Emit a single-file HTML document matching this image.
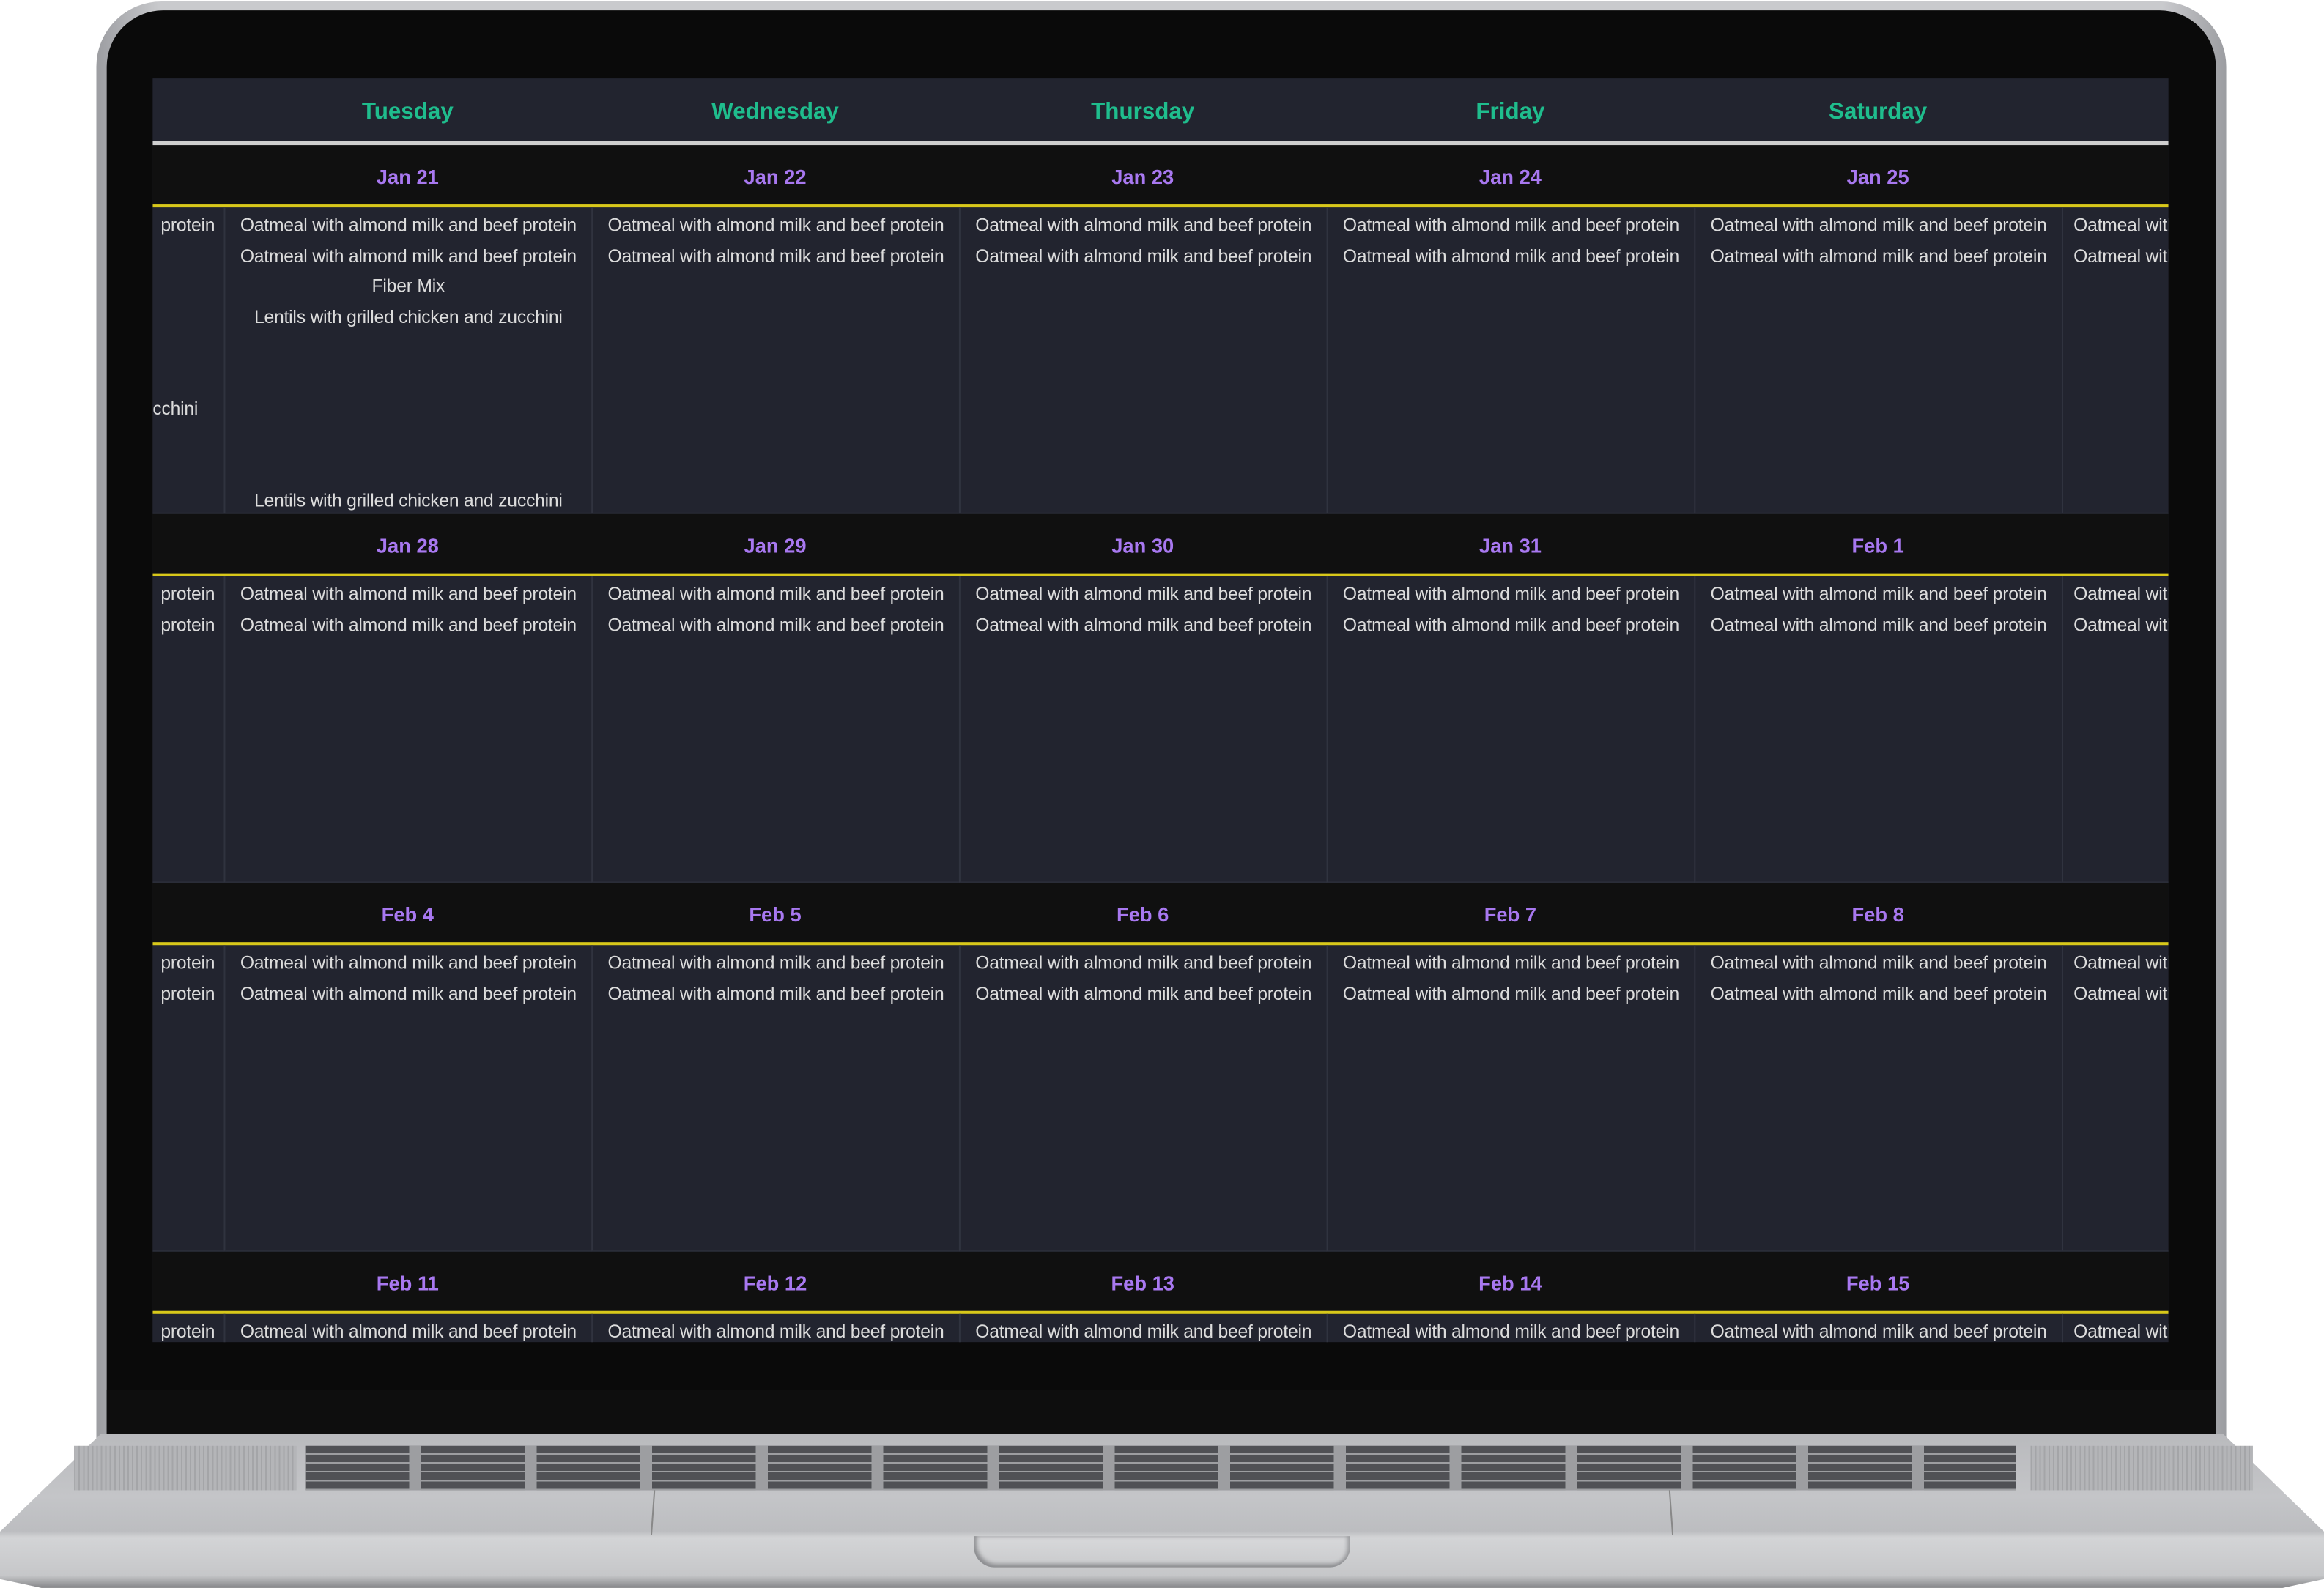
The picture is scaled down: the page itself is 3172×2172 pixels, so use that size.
<!DOCTYPE html>
<html><head><meta charset="utf-8"><style>
*{margin:0;padding:0;box-sizing:border-box}
html,body{width:3172px;height:2172px;background:#fff;overflow:hidden}
#w{position:absolute;left:0;top:0;width:1568px;height:1074px;transform:scale(2.0230,2.0223);transform-origin:0 0}
.lid{position:absolute;left:65px;top:1px;width:1437px;height:980px;border-radius:44px 44px 0 0;background:linear-gradient(90deg,#9c9da1,#c9cacd 3%,#c9cacd 97%,#9c9da1)}
.bez{position:absolute;left:72px;top:7px;width:1423px;height:975px;border-radius:38px 38px 0 0;background:#0a0a0a}
.chin{position:absolute;left:72px;top:938px;width:1423px;height:35px;background:#0e0e0e}
.scr{position:absolute;left:103px;top:53px;width:1360px;height:853px;overflow:hidden;background:#22242f;font-family:"Liberation Sans",sans-serif}
.hdr{position:absolute;left:0;top:0;width:1360px;height:42px;background:#22242f}
.bar{position:absolute;left:0;top:42px;width:1360px;height:3px;background:#cfcfcf}
.c{position:absolute;text-align:center;white-space:nowrap;overflow:hidden}
.day{top:2px;height:42px;line-height:42px;color:#1fbd8d;font-weight:bold;font-size:15.5px;width:248px}
.row{position:absolute;left:0;width:1360px;height:249px}
.band{position:absolute;left:0;top:0;width:1360px;height:40px;background:#101010}
.dt{top:2px;height:40px;line-height:40px;color:#a878f0;font-weight:bold;font-size:13.5px;width:248px}
.yl{position:absolute;left:0;top:40px;width:1360px;height:2px;background:#d8c81a}
.cell{position:absolute;top:42px;height:207px;border-left:1px solid #30333f;border-bottom:1px solid #2a2d38;padding-top:2px}
.cell div{height:20.7px;line-height:20.7px;font-size:12.2px;color:#dcdcdc;white-space:nowrap;text-align:center;overflow:hidden;letter-spacing:-0.1px}
.f div{text-align:right;padding-right:6px}
.l div{text-align:left;padding-left:7px}
.base{position:absolute;left:0;top:968px;width:1568px;height:106px;clip-path:polygon(68px 0,1500px 0,1568px 66px,1568px 98px,1540px 104px,28px 104px,0 98px,0 66px);background:linear-gradient(180deg,#b9babd 0,#c4c5c8 40%,#bcbdc0 62%,#d3d4d6 66%,#c6c7c9 90%,#8e8f92 97%,#3a3a3c 100%)}
.kb{position:absolute;left:206px;top:976px;width:1154px;height:30px;
background-image:repeating-linear-gradient(180deg,rgba(0,0,0,0) 0 5px,#9d9ea1 5px 6px),repeating-linear-gradient(90deg,#505155 0 70px,#9d9ea1 70px 78px);background-color:#505155}
.grill{position:absolute;top:976px;width:150px;height:30px;background:repeating-linear-gradient(90deg,#a4a5a8 0 1px,#b4b5b8 1px 3px)}
.notch{position:absolute;left:657px;top:1037px;width:254px;height:21px;border-radius:0 0 14px 14px;background:linear-gradient(180deg,#d8d9db,#c9cacc);box-shadow:inset 2px -2px 3px #8d8e91,inset -2px 0 3px #9a9b9e}
.tp{position:absolute;top:1006px;width:1px;height:30px;background:#888}
</style></head><body><div id="w">
<div class="lid"></div><div class="bez"></div><div class="chin"></div>
<div class="scr">
<div class="hdr"></div>
<div class="c day" style="left:48px">Tuesday</div>
<div class="c day" style="left:296px">Wednesday</div>
<div class="c day" style="left:544px">Thursday</div>
<div class="c day" style="left:792px">Friday</div>
<div class="c day" style="left:1040px">Saturday</div>
<div class="bar"></div>

<div class="row" style="top:45px"><div class="band"></div>
<div class="c dt" style="left:48px">Jan 21</div><div class="c dt" style="left:296px">Jan 22</div><div class="c dt" style="left:544px">Jan 23</div><div class="c dt" style="left:792px">Jan 24</div><div class="c dt" style="left:1040px">Jan 25</div>
<div class="yl"></div>
<div class="cell f" style="left:-1px;width:49px"><div>protein</div><div></div><div></div><div></div><div></div><div></div><div style="text-align:left;padding-left:0">cchini</div></div>
<div class="cell" style="left:48px;width:248px"><div>Oatmeal with almond milk and beef protein</div><div>Oatmeal with almond milk and beef protein</div><div>Fiber Mix</div><div>Lentils with grilled chicken and zucchini</div><div></div><div></div><div></div><div></div><div></div><div>Lentils with grilled chicken and zucchini</div></div>
<div class="cell" style="left:296px;width:248px"><div>Oatmeal with almond milk and beef protein</div><div>Oatmeal with almond milk and beef protein</div></div>
<div class="cell" style="left:544px;width:248px"><div>Oatmeal with almond milk and beef protein</div><div>Oatmeal with almond milk and beef protein</div></div>
<div class="cell" style="left:792px;width:248px"><div>Oatmeal with almond milk and beef protein</div><div>Oatmeal with almond milk and beef protein</div></div>
<div class="cell" style="left:1040px;width:248px"><div>Oatmeal with almond milk and beef protein</div><div>Oatmeal with almond milk and beef protein</div></div>
<div class="cell l" style="left:1288px;width:248px"><div>Oatmeal with almond milk and beef protein</div><div>Oatmeal with almond milk and beef protein</div></div>
</div>

<div class="row" style="top:294px"><div class="band"></div>
<div class="c dt" style="left:48px">Jan 28</div><div class="c dt" style="left:296px">Jan 29</div><div class="c dt" style="left:544px">Jan 30</div><div class="c dt" style="left:792px">Jan 31</div><div class="c dt" style="left:1040px">Feb 1</div>
<div class="yl"></div>
<div class="cell f" style="left:-1px;width:49px"><div>protein</div><div>protein</div></div>
<div class="cell" style="left:48px;width:248px"><div>Oatmeal with almond milk and beef protein</div><div>Oatmeal with almond milk and beef protein</div></div>
<div class="cell" style="left:296px;width:248px"><div>Oatmeal with almond milk and beef protein</div><div>Oatmeal with almond milk and beef protein</div></div>
<div class="cell" style="left:544px;width:248px"><div>Oatmeal with almond milk and beef protein</div><div>Oatmeal with almond milk and beef protein</div></div>
<div class="cell" style="left:792px;width:248px"><div>Oatmeal with almond milk and beef protein</div><div>Oatmeal with almond milk and beef protein</div></div>
<div class="cell" style="left:1040px;width:248px"><div>Oatmeal with almond milk and beef protein</div><div>Oatmeal with almond milk and beef protein</div></div>
<div class="cell l" style="left:1288px;width:248px"><div>Oatmeal with almond milk and beef protein</div><div>Oatmeal with almond milk and beef protein</div></div>
</div>

<div class="row" style="top:543px"><div class="band"></div>
<div class="c dt" style="left:48px">Feb 4</div><div class="c dt" style="left:296px">Feb 5</div><div class="c dt" style="left:544px">Feb 6</div><div class="c dt" style="left:792px">Feb 7</div><div class="c dt" style="left:1040px">Feb 8</div>
<div class="yl"></div>
<div class="cell f" style="left:-1px;width:49px"><div>protein</div><div>protein</div></div>
<div class="cell" style="left:48px;width:248px"><div>Oatmeal with almond milk and beef protein</div><div>Oatmeal with almond milk and beef protein</div></div>
<div class="cell" style="left:296px;width:248px"><div>Oatmeal with almond milk and beef protein</div><div>Oatmeal with almond milk and beef protein</div></div>
<div class="cell" style="left:544px;width:248px"><div>Oatmeal with almond milk and beef protein</div><div>Oatmeal with almond milk and beef protein</div></div>
<div class="cell" style="left:792px;width:248px"><div>Oatmeal with almond milk and beef protein</div><div>Oatmeal with almond milk and beef protein</div></div>
<div class="cell" style="left:1040px;width:248px"><div>Oatmeal with almond milk and beef protein</div><div>Oatmeal with almond milk and beef protein</div></div>
<div class="cell l" style="left:1288px;width:248px"><div>Oatmeal with almond milk and beef protein</div><div>Oatmeal with almond milk and beef protein</div></div>
</div>

<div class="row" style="top:792px"><div class="band"></div>
<div class="c dt" style="left:48px">Feb 11</div><div class="c dt" style="left:296px">Feb 12</div><div class="c dt" style="left:544px">Feb 13</div><div class="c dt" style="left:792px">Feb 14</div><div class="c dt" style="left:1040px">Feb 15</div>
<div class="yl"></div>
<div class="cell f" style="left:-1px;width:49px"><div>protein</div></div>
<div class="cell" style="left:48px;width:248px"><div>Oatmeal with almond milk and beef protein</div></div>
<div class="cell" style="left:296px;width:248px"><div>Oatmeal with almond milk and beef protein</div></div>
<div class="cell" style="left:544px;width:248px"><div>Oatmeal with almond milk and beef protein</div></div>
<div class="cell" style="left:792px;width:248px"><div>Oatmeal with almond milk and beef protein</div></div>
<div class="cell" style="left:1040px;width:248px"><div>Oatmeal with almond milk and beef protein</div></div>
<div class="cell l" style="left:1288px;width:248px"><div>Oatmeal with almond milk and beef protein</div></div>
</div>
</div>

<div class="base"></div>
<div class="grill" style="left:50px"></div>
<div class="grill" style="left:1370px"></div>
<div class="kb"></div>
<div class="tp" style="left:440px;transform:rotate(4deg)"></div>
<div class="tp" style="left:1127px;transform:rotate(-4deg)"></div>
<div class="notch"></div>
</div></body></html>
